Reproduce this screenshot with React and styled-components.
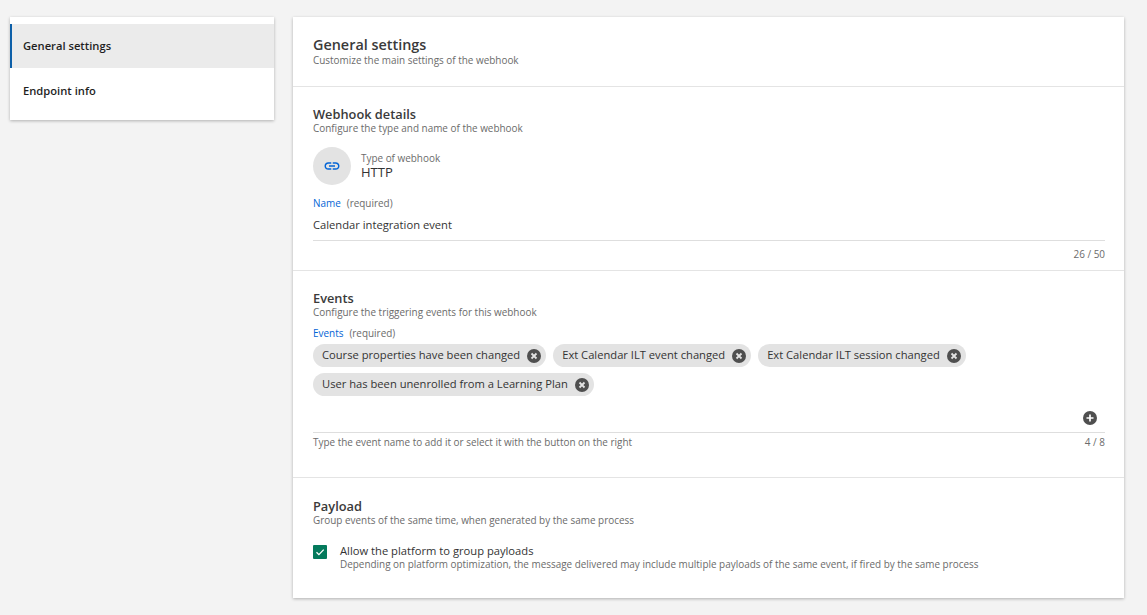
import styled, { createGlobalStyle } from 'styled-components';

const Global = createGlobalStyle`
  html, body { margin: 0; padding: 0; background: #f3f3f3; }
  body { font-family: "Open Sans", "Noto Sans", sans-serif; color: #333; }
`;

const Page = styled.div`
  display: flex;
  align-items: flex-start;
  gap: 19px;
  padding: 17px 23px 17px 10px;
  width: 1147px;
  height: 615px;
  box-sizing: border-box;
  overflow: hidden;
`;

const Side = styled.nav`
  width: 264px;
  flex: none;
  padding: 7px 0;
  background: #fff;
  box-shadow: 0 1px 3px rgba(0, 0, 0, 0.28);
`;

const SideItem = styled.div`
  height: ${p => (p.$active ? 44 : 45)}px;
  display: flex;
  align-items: center;
  padding: 0 0 1px 11px;
  box-sizing: border-box;
  font-size: 11.2px;
  font-weight: 600;
  color: #1f1f1f;
  background: ${p => (p.$active ? '#ebebeb' : '#fff')};
  border-left: 2px solid ${p => (p.$active ? '#0d5fa8' : 'transparent')};
`;

const Main = styled.main`
  flex: 1;
  height: 581px;
  background: #fff;
  box-shadow: 0 1px 3px rgba(0, 0, 0, 0.28);
`;

const Section = styled.section`
  height: ${p => p.$h}px;
  box-sizing: border-box;
  padding: ${p => p.$top}px 19px 0 20px;
  border-bottom: ${p => (p.$last ? 'none' : '1px solid #e4e4e4')};
`;

const Title = styled.h2`
  margin: 0;
  font-size: ${p => (p.$big ? 14.4 : 12.8)}px;
  line-height: ${p => (p.$big ? 18 : 15)}px;
  font-weight: 600;
  color: #3a3a3a;
`;

const Sub = styled.p`
  margin: 0;
  font-size: 9.94px;
  line-height: 12px;
  color: #6b6b6b;
`;

const TypeRow = styled.div`
  display: flex;
  align-items: center;
  gap: 10px;
  margin-top: 13px;
`;

const TypeCircle = styled.div`
  width: 38px;
  height: 38px;
  border-radius: 50%;
  background: #e3e3e3;
  display: flex;
  align-items: center;
  justify-content: center;
`;

const TypeLabel = styled.div`
  font-size: 9.94px;
  line-height: 12px;
  color: #6b6b6b;
`;

const TypeValue = styled.div`
  font-size: 13px;
  line-height: 17px;
  font-weight: 500;
  color: #333;
`;

const FieldLabel = styled.div`
  margin-top: ${p => p.$mt}px;
  font-size: 9.94px;
  line-height: 13px;
  color: #0465d6;
  font-weight: 500;
  span {
    margin-left: 6px;
    color: #6b6b6b;
    font-weight: 400;
  }
`;

const NameInput = styled.div`
  margin-top: 7px;
  height: 23px;
  font-size: 11.2px;
  line-height: 16px;
  color: #333;
  border-bottom: 1px solid #dedede;
`;

const Helper = styled.div`
  display: flex;
  justify-content: space-between;
  margin-top: ${p => p.$mt}px;
  font-size: 9.94px;
  line-height: 12px;
  color: #6b6b6b;
`;

const ChipsBox = styled.div`
  display: flex;
  flex-wrap: wrap;
  gap: 6px 7px;
  margin-top: 4px;
  height: 88px;
  align-content: flex-start;
  position: relative;
  border-bottom: 1px solid #dedede;
`;

const Chip = styled.div`
  height: 23px;
  display: inline-flex;
  align-items: center;
  gap: 6px;
  padding: 0 4px 2px 9px;
  box-sizing: border-box;
  border-radius: 12px;
  background: #e3e3e3;
  font-size: 11.18px;
  color: #333;
  white-space: nowrap;
  svg {
    margin-top: 2px;
  }
`;

const AddBtn = styled.div`
  position: absolute;
  right: 8px;
  bottom: 7px;
  display: flex;
`;

const CheckRow = styled.div`
  display: flex;
  gap: 13px;
  margin-top: 17px;
`;

const Box = styled.div`
  width: 14px;
  height: 14px;
  margin-top: 2px;
  border-radius: 1px;
  background: #047a5c;
  display: flex;
  align-items: center;
  justify-content: center;
  flex: none;
`;

const CheckTitle = styled.div`
  font-size: 11.2px;
  line-height: 15px;
  color: #333;
`;

const LinkIcon = () => (
  <svg width="18" height="18" viewBox="0 0 24 24" fill="#0465d6">
    <path d="M3.9 12c0-1.71 1.39-3.1 3.1-3.1h4V7H7c-2.76 0-5 2.24-5 5s2.24 5 5 5h4v-1.9H7c-1.71 0-3.1-1.39-3.1-3.1zM8 13h8v-2H8v2zm9-6h-4v1.9h4c1.71 0 3.1 1.39 3.1 3.1s-1.39 3.1-3.1 3.1h-4V17h4c2.76 0 5-2.24 5-5s-2.24-5-5-5z" />
  </svg>
);

const RemoveIcon = () => (
  <svg width="16" height="16" viewBox="0 0 16 16">
    <circle cx="8" cy="8" r="7" fill="#4f4f4f" />
    <path d="M5.5 5.5l5 5M10.5 5.5l-5 5" stroke="#e3e3e3" strokeWidth="1.8" />
  </svg>
);

const PlusIcon = () => (
  <svg width="14" height="14" viewBox="0 0 14 14">
    <circle cx="7" cy="7" r="7" fill="#4f4f4f" />
    <path d="M7 3.5v7M3.5 7h7" stroke="#fff" strokeWidth="1.7" />
  </svg>
);

const events = [
  'Course properties have been changed',
  'Ext Calendar ILT event changed',
  'Ext Calendar ILT session changed',
  'User has been unenrolled from a Learning Plan',
];

export default function App() {
  return (
    <Page>
      <Global />
      <Side>
        <SideItem $active>General settings</SideItem>
        <SideItem>Endpoint info</SideItem>
      </Side>
      <Main>
        <Section $h={70} $top={19}>
          <Title $big>General settings</Title>
          <Sub>Customize the main settings of the webhook</Sub>
        </Section>
        <Section $h={184} $top={20}>
          <Title>Webhook details</Title>
          <Sub>Configure the type and name of the webhook</Sub>
          <TypeRow>
            <TypeCircle><LinkIcon /></TypeCircle>
            <div>
              <TypeLabel>Type of webhook</TypeLabel>
              <TypeValue>HTTP</TypeValue>
            </div>
          </TypeRow>
          <FieldLabel $mt={12}>Name<span>(required)</span></FieldLabel>
          <NameInput>Calendar integration event</NameInput>
          <Helper $mt={7}><span /><span>26 / 50</span></Helper>
        </Section>
        <Section $h={207} $top={20}>
          <Title>Events</Title>
          <Sub>Configure the triggering events for this webhook</Sub>
          <FieldLabel $mt={9}>Events<span>(required)</span></FieldLabel>
          <ChipsBox>
            {events.map(e => (
              <Chip key={e}>{e}<RemoveIcon /></Chip>
            ))}
            <AddBtn><PlusIcon /></AddBtn>
          </ChipsBox>
          <Helper $mt={3}>
            <span>Type the event name to add it or select it with the button on the right</span>
            <span>4 / 8</span>
          </Helper>
        </Section>
        <Section $h={120} $top={21} $last>
          <Title>Payload</Title>
          <Sub>Group events of the same time, when generated by the same process</Sub>
          <CheckRow>
            <Box>
              <svg width="10" height="10" viewBox="0 0 10 10" fill="none">
                <path d="M1.5 5.2l2.4 2.4 4.8-5" stroke="#fff" strokeWidth="1.3" />
              </svg>
            </Box>
            <div>
              <CheckTitle>Allow the platform to group payloads</CheckTitle>
              <Sub>Depending on platform optimization, the message delivered may include multiple payloads of the same event, if fired by the same process</Sub>
            </div>
          </CheckRow>
        </Section>
      </Main>
    </Page>
  );
}
